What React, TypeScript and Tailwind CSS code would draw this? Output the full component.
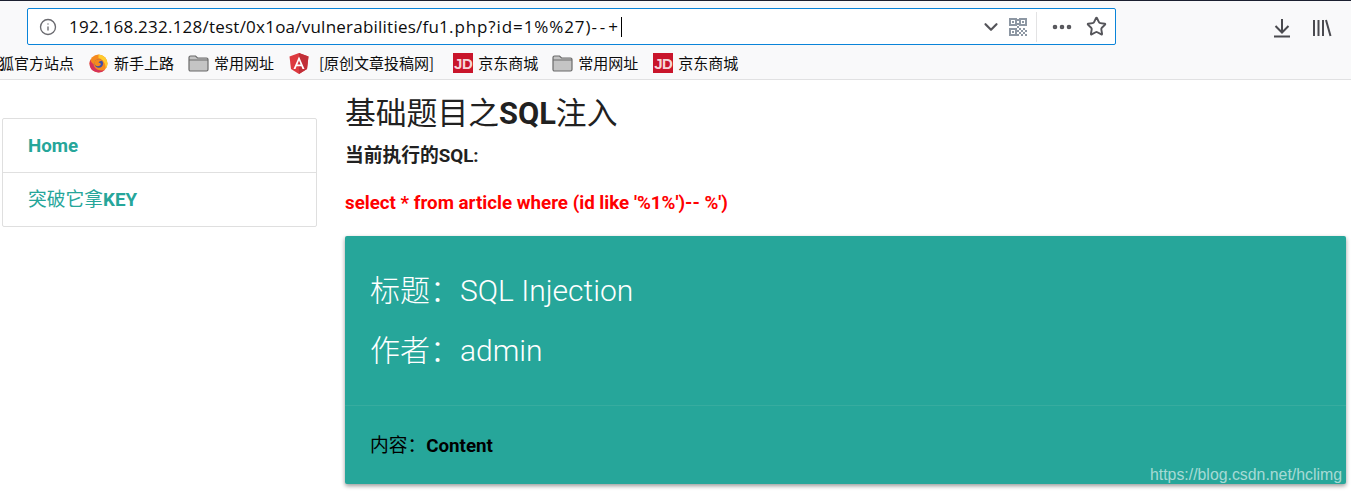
import type { ReactNode } from "react";
import { ChevronDown, Ellipsis, Info, Star } from "lucide-react";

function FolderIcon() {
  return (
    <svg width="21" height="18" viewBox="0 0 21 18" className="shrink-0">
      <path d="M1 3.500C1 2.500 1.600 2 2.500 2h5l2 2h9c1 0 1.500.6 1.500 1.500v10c0 1-.6 1.500-1.500 1.500h-16C1.600 17 1 16.400 1 15.500z" fill="#c4c4c4" stroke="#6b6b6b" strokeWidth="1.200" />
      <path d="M1 6h19" stroke="#6b6b6b" strokeWidth="1" />
    </svg>
  );
}

function JdIcon() {
  return (
    <div className="flex h-5 w-5 shrink-0 items-center justify-center bg-[#c9152b] text-[15px] font-bold leading-none tracking-[-0.5px] text-[#f6d5da] font-['Liberation_Sans',sans-serif]">
      JD
    </div>
  );
}

function FirefoxIcon() {
  return (
    <svg width="19" height="20" viewBox="0 0 19 20" className="shrink-0">
      <circle cx="9.500" cy="10.500" r="9" fill="#f58a1f" />
      <path d="M9.500 1.500a9 9 0 0 1 9 9c0 2-.7 3.800-1.800 5.300C17 11 14 6 9.500 5z" fill="#ffcb2e" />
      <path d="M.5 10.500a9 9 0 0 0 15.500 6.200C11 19 5 16 4.500 11 3 10 1.500 9 1.500 6.500A9 9 0 0 0 .5 10.500z" fill="#d6325a" />
      <circle cx="9.800" cy="10.500" r="4.300" fill="#3f4fa8" />
      <path d="M6 8c2-2.500 6-2 7.500 0-1.500-.5-3 .5-4 1.500 1 .5 2 .5 2.500 1.500-1 2.500-4 3-6 1C5 11 5 9.500 6 8z" fill="#f58a1f" />
    </svg>
  );
}

function AngularIcon() {
  return (
    <svg width="20" height="21" viewBox="0 0 20 21" className="shrink-0">
      <path d="M10 0 .5 3.400 2 16l8 5 8-5 1.500-12.600z" fill="#dd3a3f" />
      <path d="M10 0v21l8-5 1.500-12.600z" fill="#c12f38" />
      <path d="M10 3.500 4.500 16h2l1.100-2.800h4.800L13.500 16h2zm-1.600 8L10 7.500l1.600 4z" fill="#fff" />
    </svg>
  );
}

function QrIcon() {
  return (
    <svg width="18" height="18" viewBox="0 0 18 18" className="shrink-0" fill="#8d97a3">
      <path d="M0 0h8v8H0zm2 2v4h4V2zM10 0h8v8h-8zm2 2v4h4V2zM0 10h8v8H0zm2 2v4h4v-4z" fillRule="evenodd" />
      <path d="M3 3h2v2H3zM13 3h2v2h-2zM3 13h2v2H3zM8 1h2v2H8zM8 5h2v2H8zM8 8h2v2H8zM10 10h2v2h-2zM14 10h2v2h-2zM12 12h2v2h-2zM16 12h2v2h-2zM10 14h2v2h-2zM14 14h2v2h-2zM12 16h2v2h-2zM16 16h2v2h-2zM8 12h2v2H8zM8 16h2v2H8z" />
    </svg>
  );
}

function DownloadIcon() {
  return (
    <svg width="18" height="20" viewBox="0 0 18 20" fill="none" stroke="#4a4a4f" strokeWidth="2" className="shrink-0">
      <path d="M9 1v13M2.500 8 9 14.500 15.500 8M1 18.500h16" />
    </svg>
  );
}

function LibraryIcon() {
  return (
    <svg width="20" height="18" viewBox="0 0 20 18" fill="none" stroke="#4a4a4f" strokeWidth="2" className="shrink-0">
      <path d="M2 1v16M6.500 1v16M11 1v16M14 1l4.500 16" />
    </svg>
  );
}

function Bookmark({ icon, label, className }: { icon?: ReactNode; label: string; className: string }) {
  return (
    <div className={`flex shrink-0 items-center ${className}`}>
      {icon}
      <span className="whitespace-nowrap">{label}</span>
    </div>
  );
}

export default function App() {
  return (
    <div className="relative h-[493px] w-[1351px] overflow-hidden bg-white font-['Roboto','Noto_Sans_CJK_SC',sans-serif]">
      {/* BROWSER BAR */}

      <div className="h-[80px] border-b border-[#e1e1e2] bg-[#f9f9fa]">
        <div className="h-px bg-[#1c2030]" />

        <div className="flex h-[45px] items-start pt-[7px] pl-[27px]">
          <div className="flex h-[37px] w-[1089px] items-center rounded-[2px] border border-[#0a84d9] bg-white pr-[8px] pl-[11px]">
            <Info size={18} strokeWidth={1.8} className="shrink-0 text-[#6a6a6f]" />

            <div className="ml-[12px] flex flex-1 items-center text-[17px] tracking-[0.23px] text-[#0c0c0d] font-['Open_Sans',sans-serif]">
              <span>192.168.232.128/test/0x1oa/vulnerabilities/fu1</span>
              <span className="tracking-[0.9px]">.php?id=1%%27)</span>
              <span className="tracking-[3px]">--+</span>
              <div className="h-[20px] w-px bg-black" />
            </div>

            <ChevronDown size={22} strokeWidth={2.4} className="shrink-0 text-[#55555a]" />
            <div className="ml-[7px]">
              <QrIcon />
            </div>
            <div className="mr-[13px] ml-[9px] h-[30px] w-px bg-[#e3e3e4]" />
            <Ellipsis size={24} strokeWidth={2.6} className="mr-[12px] shrink-0 text-[#55555a]" />
            <Star size={21} strokeWidth={2.2} className="shrink-0 text-[#55555a]" />
          </div>

          <div className="ml-[157px] flex items-center gap-[21px] pt-[10px]">
            <DownloadIcon />
            <LibraryIcon />
          </div>
        </div>

        <div className="-ml-[1px] flex h-[34px] items-center text-[15px] text-[#0c0c0d] font-['Noto_Sans_CJK_SC',sans-serif]">
          <Bookmark label="狐官方站点" className="mr-[15px]" />
          <Bookmark icon={<FirefoxIcon />} label="新手上路" className="mr-[14px] gap-[6px]" />
          <Bookmark icon={<FolderIcon />} label="常用网址" className="mr-[15px] gap-[5px]" />
          <Bookmark icon={<AngularIcon />} label="[原创文章投稿网]" className="mr-[19px] gap-[10px]" />
          <Bookmark icon={<JdIcon />} label="京东商城" className="mr-[14px] gap-[5px]" />
          <Bookmark icon={<FolderIcon />} label="常用网址" className="mr-[15px] gap-[5px]" />
          <Bookmark icon={<JdIcon />} label="京东商城" className="gap-[5px]" />
        </div>
      </div>

      {/* PAGE */}

      <div className="flex items-start pr-[5px] pl-[2px]">
        <div className="mt-[38px] w-[315px] shrink-0 rounded-[2px] border border-[#dfdfdf] text-[18.75px] leading-[26px] text-[#26a69a]">
          <div className="flex h-[54px] items-center border-b border-[#e0e0e0] px-[25px] font-bold">
            Home
          </div>
          <div className="flex h-[53px] items-center px-[25px]">
            突破它拿<b>KEY</b>
          </div>
        </div>

        <div className="ml-[28px] min-w-0 flex-1">
          <h1 className="mt-[15px] text-[30.8px] leading-[38px] text-[#212121]">
            基础题目之<b>SQL</b>注入
          </h1>

          <p className="mt-[10px] text-[18.75px] font-bold leading-[26px] text-[#212121]">
            当前执行的SQL:
          </p>

          <p className="mt-[21px] text-[18.75px] font-bold leading-[26px] text-[#ff0000]">
            select * from article where (id like &#39;%1%&#39;)-- %&#39;)
          </p>

          <div className="mt-[20px] h-[248px] rounded-[2px] bg-[#26a69a] shadow-[0_2px_4px_rgba(0,0,0,0.4)]">
            <div className="h-[170px] border-b border-[#37ac9f] px-[25px] pt-[25px] text-[30px] font-light leading-[60px] text-white">
              <div>标题：SQL Injection</div>
              <div>作者：admin</div>
            </div>
            <div className="px-[25px] pt-[27px] text-[18.75px] leading-[26px] text-black">
              内容：<b>Content</b>
            </div>
          </div>
        </div>
      </div>

      {/* WATERMARK */}

      <div className="absolute right-[9px] bottom-[8px] text-[15.85px] leading-[20px] text-white/60 font-['Liberation_Sans',sans-serif]">
        https://blog.csdn.net/hclimg
      </div>
    </div>
  );
}
